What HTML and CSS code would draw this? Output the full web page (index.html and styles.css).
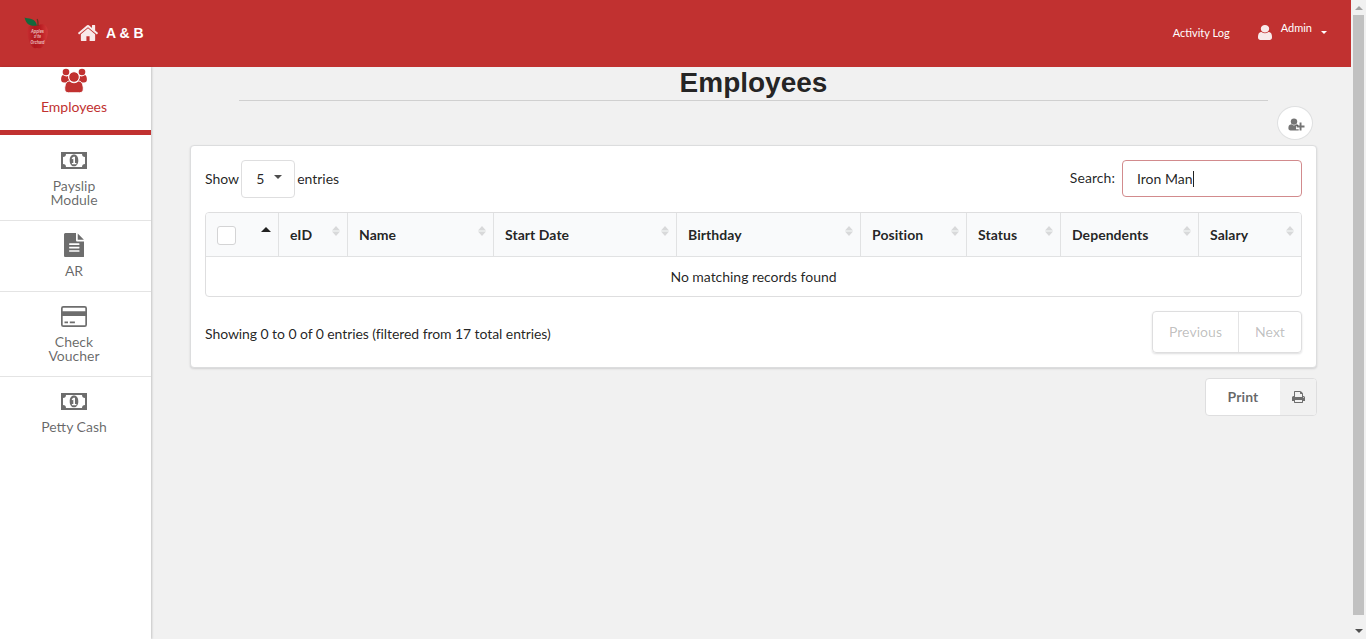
FILE: index.html
```html
<!DOCTYPE html>
<html lang="en">
<head>
<meta charset="utf-8">
<title>Employees</title>
<link rel="stylesheet" href="styles.css">
</head>
<body>
<svg class="defs" width="0" height="0">
  <symbol id="money" viewBox="0 0 26 17">
    <path fill-rule="evenodd" d="M0 0h26v17H0zM5 2a3 3 0 0 1-3 3v7a3 3 0 0 1 3 3h16a3 3 0 0 1 3-3V5a3 3 0 0 1-3-3z"/>
    <path fill-rule="evenodd" d="M13 2.600c2.800 0 4.300 2.700 4.300 5.800S15.800 14.300 13 14.300 8.700 11.500 8.700 8.400 10.200 2.600 13 2.600zM12.500 4.700L10.600 6.300l.9 1 .8-.6v4.200h-1.400v1.300h4.500v-1.300H14V4.700z"/>
  </symbol>
  <symbol id="sort" viewBox="0 0 8 10"><path d="M4 0L8 4.600H0zM4 10L0 5.400h8z"/></symbol>
</svg>
<div class="window">
  <div class="page">
    <header class="topbar">
      <svg class="logo" viewBox="0 0 26 34">
        <defs><linearGradient id="skin"><stop offset="0" stop-color="#c62d30"/><stop offset=".35" stop-color="#b0181e"/><stop offset=".65" stop-color="#b91d22"/><stop offset="1" stop-color="#d23a3a"/></linearGradient></defs>
        <path fill="url(#skin)" d="M14 8.500c5-3 9.700-.5 9.700 6 0 7-3.700 15.500-6.700 16.500-1.500.6-2.500 0-3.500 0s-2 .5-3.500 0C7 30 3.200 21.500 3.200 14.500c0-6.500 5.500-9 10.800-6z"/>
        <path fill="none" stroke="#6e3022" stroke-width="1.300" d="M14 9c.2-2.500 0-5-.8-7"/>
        <path fill="#14693c" d="M.6.500C3.500 1.800 11.500.5 13 8.600 6.500 9.600 2 7.500.6.500z"/>
        <g class="logo-text"><text x="13.500" y="15.500" textLength="13" lengthAdjust="spacingAndGlyphs">Apples</text><text x="13.500" y="21" textLength="7" lengthAdjust="spacingAndGlyphs">of the</text><text x="13.500" y="26.500" textLength="14" lengthAdjust="spacingAndGlyphs">Orchard</text></g>
      </svg>
      <a class="brand">
        <svg class="home" viewBox="89 253 1614 1283"><path d="M1472 992v480q0 26-19 45t-45 19h-384v-384h-256v384h-384q-26 0-45-19t-19-45v-480q0-1 .5-3t.5-3l575-474 575 474q1 2 1 6zm223-69l-62 74q-8 9-21 11h-3q-13 0-21-7l-692-577-692 577q-12 8-24 7-13-2-21-11l-62-74q-8-10-7-23.500t11-21.500l719-599q32-26 76-26t76 26l244 204v-195q0-14 9-23t23-9h192q14 0 23 9t9 23v408l219 182q10 8 11 21.500t-7 23.500z"/></svg>
        <span>A &amp; B</span>
      </a>
      <nav class="account">
        <a class="log">Activity Log</a>
        <svg class="user" viewBox="256 128 1280 1536" preserveAspectRatio="none"><path d="M1536 1399q0 109-62.500 187t-150.500 78h-854q-88 0-150.500-78t-62.500-187q0-85 8.500-160.500t31.500-152 58.500-131 94-89 134.500-34.500q131 128 313 128t313-128q76 0 134.500 34.500t94 89 58.500 131 31.500 152 8.500 160.500zm-256-887q0 159-112.500 271.500t-271.500 112.500-271.500-112.500-112.500-271.500 112.500-271.500 271.500-112.500 271.500 112.500 112.500 271.500z"/></svg>
        <span class="admin">Admin</span>
        <i class="caret"></i>
      </nav>
    </header>
    <div class="body">
      <aside class="sidebar">
        <a class="item active">
          <svg class="i-users" viewBox="0 0 26 25"><circle cx="5" cy="4" r="3.300"/><circle cx="21" cy="4" r="3.300"/><path d="M1.800 7q3.200 2.300 5.400 1c0 2.500.9 4.200 1.800 5-2 0-3 .9-3.500 1.500H3C1 14.500.1 13.200.1 11.500.1 9.500.6 7.500 1.800 7zM24.200 7q-3.200 2.300-5.400 1c0 2.500-.9 4.200-1.800 5 2 0 3 .9 3.500 1.500H23c2 0 2.900-1.300 2.900-3 0-2-.5-4-1.700-4.500z"/><circle class="halo" cx="13" cy="9" r="5.300"/><path class="halo" d="M8.500 13q4.500 3.500 9 0c3.500.2 4.800 3.800 4.800 8 0 2.200-1.500 3.800-3.600 3.800H7.300c-2.100 0-3.600-1.600-3.600-3.800 0-4.200 1.300-7.800 4.800-8z"/></svg>
          <span>Employees</span>
        </a>
        <a class="item">
          <svg class="i-money"><use href="#money"/></svg>
          <span>Payslip<br>Module</span>
        </a>
        <a class="item">
          <svg class="i-file" viewBox="128 0 1536 1792"><path d="M1596 476q14 14 28 36h-472v-472q22 14 36 28zm-476 164h544v1056q0 40-28 68t-68 28h-1344q-40 0-68-28t-28-68v-1600q0-40 28-68t68-28h800v544q0 40 28 68t68 28zm160 736v-64q0-14-9-23t-23-9h-704q-14 0-23 9t-9 23v64q0 14 9 23t23 9h704q14 0 23-9t9-23zm0-256v-64q0-14-9-23t-23-9h-704q-14 0-23 9t-9 23v64q0 14 9 23t23 9h704q14 0 23-9t9-23zm0-256v-64q0-14-9-23t-23-9h-704q-14 0-23 9t-9 23v64q0 14 9 23t23 9h704q14 0 23-9t9-23z"/></svg>
          <span>AR</span>
        </a>
        <a class="item">
          <svg class="i-card" viewBox="0 0 26 21"><path fill-rule="evenodd" d="M2.300 0h21.400A2.300 2.300 0 0 1 26 2.300v16.400a2.300 2.300 0 0 1-2.300 2.300H2.300A2.300 2.300 0 0 1 0 18.700V2.300A2.300 2.300 0 0 1 2.300 0zM2.300 1.700q-.6 0-.6.600V5.200h22.600V2.300q0-.6-.6-.6zM1.700 10v8.700q0 .6.600.6h21.400q.6 0 .6-.6V10zM3.500 15.500h3.500v1.700H3.500zM8.800 15.500h5.100v1.700H8.800z"/></svg>
          <span>Check<br>Voucher</span>
        </a>
        <a class="item last">
          <svg class="i-money"><use href="#money"/></svg>
          <span>Petty Cash</span>
        </a>
      </aside>
      <main class="content">
        <h1>Employees</h1>
        <button class="add"><svg viewBox="0 0 17 13"><circle cx="6" cy="3.600" r="3.200"/><path d="M3.500 6.300Q6 8.600 8.500 6.300q1.200.1 1.800.8v.9H8v3.200h2.700v1.200H2.600C1.200 12.400.4 11.500.4 10.200.4 8 .9 6.500 3.500 6.300z"/><path d="M11.600 4.600h1.900v3h3v1.900h-3v3h-1.900v-3h-3V7.600h3z"/></svg></button>
        <section class="panel">
          <div class="tools">
            <label class="length">Show <span class="select">5<i class="caret"></i></span> entries</label>
            <label class="search"><span class="search-label">Search:</span> <span class="field">Iron Man<i class="cursor"></i></span></label>
          </div>
          <table>
            <colgroup><col class="c1"><col class="c2"><col class="c3"><col class="c4"><col class="c5"><col class="c6"><col class="c7"><col class="c8"><col class="c9"></colgroup>
            <thead><tr>
              <th><div class="th"><i class="check"></i><i class="asc"></i></div></th>
              <th><div class="th">eID<svg><use href="#sort"/></svg></div></th>
              <th><div class="th">Name<svg><use href="#sort"/></svg></div></th>
              <th><div class="th">Start Date<svg><use href="#sort"/></svg></div></th>
              <th><div class="th">Birthday<svg><use href="#sort"/></svg></div></th>
              <th><div class="th">Position<svg><use href="#sort"/></svg></div></th>
              <th><div class="th">Status<svg><use href="#sort"/></svg></div></th>
              <th><div class="th">Dependents<svg><use href="#sort"/></svg></div></th>
              <th><div class="th">Salary<svg><use href="#sort"/></svg></div></th>
            </tr></thead>
            <tbody><tr><td colspan="9">No matching records found</td></tr></tbody>
          </table>
          <div class="foot">
            <span>Showing 0 to 0 of 0 entries (filtered from 17 total entries)</span>
            <div class="pager"><a class="prev">Previous</a><a class="next">Next</a></div>
          </div>
        </section>
        <button class="print"><span>Print</span><span class="print-icon"><svg viewBox="64 128 1664 1536"><path d="M448 1536h896v-256h-896v256zm0-640h896v-384h-160q-40 0-68-28t-28-68v-160h-640v640zm1152 64q0-26-19-45t-45-19-45 19-19 45 19 45 45 19 45-19 19-45zm128 0v416q0 13-9.500 22.500t-22.500 9.500h-224v160q0 40-28 68t-68 28h-960q-40 0-68-28t-28-68v-160h-224q-13 0-22.500-9.500t-9.500-22.500v-416q0-79 56.500-135.500t135.500-56.500h64v-544q0-40 28-68t68-28h672q40 0 88 20t76 48l152 152q28 28 48 76t20 88v256h64q79 0 135.500 56.500t56.500 135.500z"/></svg></span></button>
      </main>
    </div>
  </div>
  <div class="scrollbar"><i class="up"></i><div class="thumb"></div><i class="down"></i></div>
</div>
</body>
</html>
```
FILE: styles.css
```css
* { box-sizing: border-box; }
body { margin: 0; background: #f1f1f1; color: rgba(0,0,0,.87); font: 14px/20px Lato, sans-serif; overflow: hidden; }
svg { display: block; fill: currentColor; flex: none; }
.defs { position: absolute; }
i { display: block; flex: none; }
button { font: inherit; color: rgba(0,0,0,.6); padding: 0; }
.window { display: flex; height: 639px; }
.page { flex: 1; display: flex; flex-direction: column; }

.topbar { height: 67px; background: #c13130; color: #fff; display: flex; align-items: center; padding: 0 24px 2px; }
.logo { width: 26px; height: 34px; margin-top: 2px; overflow: visible; }
.logo-text { fill: #ecc0c0; font: italic bold 6px "Liberation Sans", sans-serif; text-anchor: middle; }
.brand { display: flex; align-items: center; margin-left: 28px; font: bold 14px/20px "Liberation Sans", sans-serif; }
.home { width: 20px; height: 16px; opacity: .9; }
.brand span { margin-left: 8px; }
.account { display: flex; align-items: center; margin-left: auto; font-size: 11px; }
.user { width: 14px; height: 15px; margin: 0 9px 0 28px; opacity: .9; }
.admin { margin-bottom: 10px; }
.caret { width: 0; height: 0; border: 4px solid transparent; border-top-color: currentColor; border-bottom: 0; }
.account .caret { border-width: 3px 3px 0; margin-left: 9px; }

.body { flex: 1; display: flex; }
.sidebar { width: 151px; background: #fff; box-shadow: 1px 0 2px rgba(0,0,0,.18); }
.item { display: flex; flex-direction: column; align-items: center; border-bottom: 1px solid #e4e4e4; color: rgba(0,0,0,.6); line-height: 14px; text-align: center; padding: 16px 3px 0 0; height: 85px; }
.item svg { opacity: .95; }
.item span { margin-top: 10px; }
.item.active { height: 68px; border-bottom: 5px solid #c13130; color: #c13130; padding-top: 2px; }
.item.active svg { margin-top: -1px; opacity: 1; }
.item.active span { margin-top: 7px; }
.halo { stroke: #fff; stroke-width: 1px; }
.item:nth-child(2) { height: 86px; padding-top: 17px; }
.item:nth-child(3) { height: 71px; padding-top: 12px; }
.item:nth-child(3) span { margin-top: 7px; }
.item:nth-child(4) { padding-top: 14px; }
.item:nth-child(4) span { margin-top: 8px; }
.item.last { border: 0; }
.i-users { width: 26px; height: 25px; }
.i-money { width: 26px; height: 17px; }
.i-file { width: 20.600px; height: 24px; }
.i-card { width: 26px; height: 21px; }

.content { flex: 1; display: flex; flex-direction: column; padding: 0 34px 0 39px; }
h1 { margin: 0 49px; height: 34px; border-bottom: 1px solid #d0d0d0; font: bold 28px/31px "Liberation Sans", sans-serif; text-align: center; }
.add { align-self: flex-end; width: 36px; height: 34px; margin: 5px 4px 5px 0; border: 1px solid #dfe0e1; border-radius: 50%; background: #fff; display: flex; align-items: center; justify-content: center; }
.add svg { width: 17px; height: 13px; margin: 2px 0 0 2px; opacity: .9; }
.panel { height: 223px; background: #fff; border: 1px solid #dcddde; border-radius: 4px; box-shadow: 0 1px 2px rgba(34,36,38,.15); padding: 14px; }
.tools { display: flex; justify-content: space-between; height: 38px; margin-bottom: 14px; }
.length, .search { display: flex; align-items: center; }
.select { width: 54px; height: 38px; border: 1px solid #dededf; border-radius: 4px; display: flex; align-items: center; padding-left: 14px; margin: 0 2px; }
.select .caret { margin: -4px 0 0 10px; opacity: .8; }
.search { height: 37px; }
.search-label { margin-bottom: 2px; letter-spacing: .06px; }
.field { width: 180px; height: 37px; border: 1px solid #d28b8d; border-radius: 4px; display: flex; align-items: center; padding-left: 14px; margin-left: 7px; }
.cursor { width: 1px; height: 16px; background: #222; }
table { width: 1097px; table-layout: fixed; border: 1px solid #dededf; border-radius: 4px; border-collapse: separate; border-spacing: 0; }
.c1 { width: 72px; } .c2 { width: 69px; } .c3 { width: 146px; } .c4 { width: 183px; } .c5 { width: 184px; } .c6 { width: 106px; } .c7 { width: 94px; } .c8 { width: 138px; } .c9 { width: 103px; }
th { height: 44px; padding: 0; background: #f9fafb; border-bottom: 1px solid #e1e2e3; font-weight: bold; letter-spacing: .05px; }
th + th { border-left: 1px solid #e1e2e3; }
th:first-child { border-top-left-radius: 3px; }
th:last-child { border-top-right-radius: 3px; }
.th { display: flex; align-items: center; justify-content: space-between; padding: 1px 7px 0 11px; }
.th svg { width: 8px; height: 10px; margin-bottom: 8px; color: #d8d9da; }
.check { width: 19px; height: 19px; border: 1px solid #d4d4d5; border-radius: 3px; background: #fff; }
.asc { border: 5px solid transparent; border-bottom: 5px solid #222; border-top: 0; margin-bottom: 12px; }
td { height: 39px; padding: 0; text-align: center; letter-spacing: -.04px; }
.foot { display: flex; justify-content: space-between; align-items: center; margin-top: 14px; }
.foot > span { padding-top: 3px; letter-spacing: -.075px; }
.pager { display: flex; height: 42px; width: 150px; border: 1px solid #dededf; border-radius: 4px; box-shadow: 0 1px 2px rgba(34,36,38,.15); color: rgba(40,40,40,.3); line-height: 40px; text-align: center; }
.prev { width: 86px; border-right: 1px solid #e4e4e5; letter-spacing: .06px; }
.next { flex: 1; }
.print { align-self: flex-end; display: flex; width: 112px; height: 38px; margin-top: 10px; border: 1px solid #dededf; border-radius: 4px; background: #fff; overflow: hidden; font-weight: bold; line-height: 36px; text-align: center; }
.print > span { flex: 1; letter-spacing: .1px; }
.print .print-icon { flex: none; width: 36px; background: #f1f1f1; display: flex; align-items: center; justify-content: center; }
.print-icon svg { width: 13px; height: 12px; opacity: .9; }

.scrollbar { width: 15px; background: #f1f1f1; display: flex; flex-direction: column; align-items: center; }
.thumb { width: 11px; height: 600px; background: #c1c1c1; }
.up { border: 4px solid transparent; border-top: 0; border-bottom-color: #a3a3a3; margin: 6px 0 5px; }
.down { border: 4px solid transparent; border-bottom: 0; border-top-color: #505050; margin-top: 14px; }
```
